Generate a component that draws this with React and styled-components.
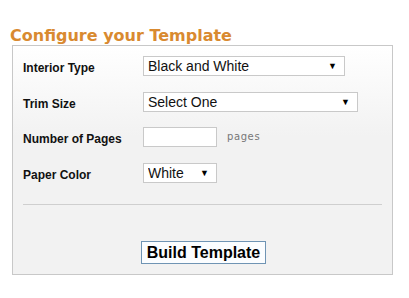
import styled, { createGlobalStyle } from 'styled-components';

const GlobalStyle = createGlobalStyle`
    body {
        margin: 0;
        background: #ffffff;
        font-family: "Liberation Sans", Arial, sans-serif;
    }
`

const Page = styled.div`
    padding: 26px 16px 0 12px;
    width: 381px;
`

const Title = styled.h2`
    margin: 0 0 0 -2px;
    font-family: "DejaVu Sans", Verdana, sans-serif;
    font-size: 16px;
    font-weight: bold;
    line-height: 19px;
    color: #d98a30;
`

const Panel = styled.div`
    border: 1px solid #c8c8c8;
    background: linear-gradient(to bottom, #ffffff 0px, #f2f2f2 90px, #f2f2f2 100%);
    padding: 10px 10px 10px 10px;
`

const Row = styled.div`
    display: flex;
    align-items: flex-start;
    height: ${props => props.h || 36}px;
`

const Label = styled.label`
    width: 120px;
    font-size: 12px;
    line-height: 14px;
    font-weight: bold;
    color: #111;
    padding-top: 5px;
`

const SelectWrap = styled.div`
    position: relative;
    width: ${props => props.w}px;
    height: 20px;
    box-sizing: border-box;
    border: 1px solid #c9c9c9;
    background: #fff;
    &::after {
        content: "▼";
        position: absolute;
        right: 7px;
        top: 4px;
        font-size: 9px;
        color: #000;
        pointer-events: none;
    }
`

const Select = styled.select`
    appearance: none;
    border: none;
    background: transparent;
    width: 100%;
    height: 100%;
    padding: 0 0 0 4px;
    font-family: "Liberation Sans", Arial, sans-serif;
    font-size: 14px;
    color: #111;
    outline: none;
`

const Input = styled.input`
    width: 74px;
    height: 20px;
    box-sizing: border-box;
    border: 1px solid #c9c9c9;
    background: #fff;
`

const Unit = styled.span`
    margin-left: 10px;
    padding-top: 4px;
    font-family: "DejaVu Sans", Verdana, sans-serif;
    font-size: 10px;
    line-height: 12px;
    letter-spacing: 0.6px;
    color: #777;
`

const Divider = styled.hr`
    border: none;
    border-top: 1px solid #cfcfcf;
    margin: 21px 0 0 0;
`

const ButtonRow = styled.div`
    display: flex;
    padding: 36px 0 0 118px;
`

const Button = styled.button`
    font-family: "Liberation Sans", Arial, sans-serif;
    font-size: 16px;
    font-weight: bold;
    color: #000;
    background: #fbfdff;
    border: 1px solid #6f94b4;
    padding: 0 4px;
    height: 23px;
    width: 125px;
`

const App = () => {
    return (
        <Page>
            <GlobalStyle />
            <Title>Configure your Template</Title>
            <Panel>
                <Row h={36}>
                    <Label>Interior Type</Label>
                    <SelectWrap w={202}>
                        <Select defaultValue="bw">
                            <option value="bw">Black and White</option>
                            <option value="color">Color</option>
                        </Select>
                    </SelectWrap>
                </Row>
                <Row h={35}>
                    <Label>Trim Size</Label>
                    <SelectWrap w={215}>
                        <Select defaultValue="">
                            <option value="">Select One</option>
                            <option>6" x 9"</option>
                        </Select>
                    </SelectWrap>
                </Row>
                <Row h={36}>
                    <Label>Number of Pages</Label>
                    <Input type="text" />
                    <Unit>pages</Unit>
                </Row>
                <Row h={20}>
                    <Label>Paper Color</Label>
                    <SelectWrap w={74}>
                        <Select defaultValue="white">
                            <option value="white">White</option>
                            <option value="cream">Cream</option>
                        </Select>
                    </SelectWrap>
                </Row>
                <Divider />
                <ButtonRow>
                    <Button>Build Template</Button>
                </ButtonRow>
            </Panel>
        </Page>
    )
}

export default App
